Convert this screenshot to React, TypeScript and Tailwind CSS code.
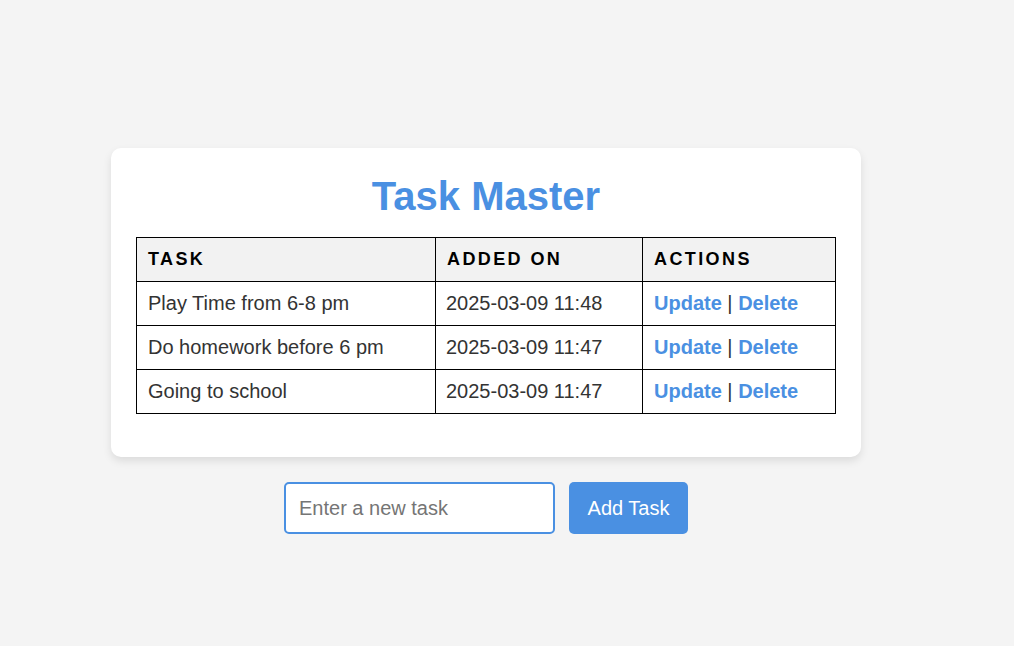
const tasks = [
  { name: 'Play Time from 6-8 pm', added: '2025-03-09 11:48' },
  { name: 'Do homework before 6 pm', added: '2025-03-09 11:47' },
  { name: 'Going to school', added: '2025-03-09 11:47' },
];

export default function App() {
  return (
    <div className="min-h-screen bg-[#f4f4f4] pt-[148px] pr-[42px] flex flex-col items-center font-['Liberation_Sans',Arial,sans-serif]">
      <div className="w-[750px] bg-white rounded-[10px] shadow-[0_4px_8px_rgba(0,0,0,0.1)] px-[25px] pt-[25px] pb-[43px]">
        <h1 className="text-center text-[40px] leading-[46px] font-bold text-[#4a90e2] mb-[18px]">Task Master</h1>
        <table className="w-[699px] table-fixed border-collapse text-[20px] text-[#333]">
          <colgroup>
            <col className="w-[299px]" />
            <col className="w-[207px]" />
            <col className="w-[193px]" />
          </colgroup>
          <thead>
            <tr className="bg-[#f2f2f2]">
              {['Task', 'Added On', 'Actions'].map((h) => (
                <th
                  key={h}
                  className="border border-black px-[11px] py-[10px] text-left text-[18px] leading-[23px] font-bold uppercase tracking-[2.4px] text-black"
                >
                  {h}
                </th>
              ))}
            </tr>
          </thead>
          <tbody>
            {tasks.map((t, i) => (
              <tr key={i}>
                <td className="border border-black px-[11px] py-[10px] leading-[23px]">{t.name}</td>
                <td className="border border-black px-[10px] py-[10px] leading-[23px]">{t.added}</td>
                <td className="border border-black px-[11px] py-[10px] leading-[23px]">
                  <a href="#" className="font-bold text-[#4a90e2]">Update</a> |{' '}
                  <a href="#" className="font-bold text-[#4a90e2]">Delete</a>
                </td>
              </tr>
            ))}
          </tbody>
        </table>
      </div>
      <div className="mt-[25px] flex gap-[14px]">
        <input
          type="text"
          placeholder="Enter a new task"
          className="w-[271px] h-[52px] border-2 border-[#4a90e2] rounded-[5px] bg-white px-[13px] text-[20px] text-[#333] placeholder:text-[#757575] outline-none"
        />
        <button className="w-[119px] h-[52px] rounded-[5px] bg-[#4a90e2] text-white text-[20px]">Add Task</button>
      </div>
    </div>
  );
}
